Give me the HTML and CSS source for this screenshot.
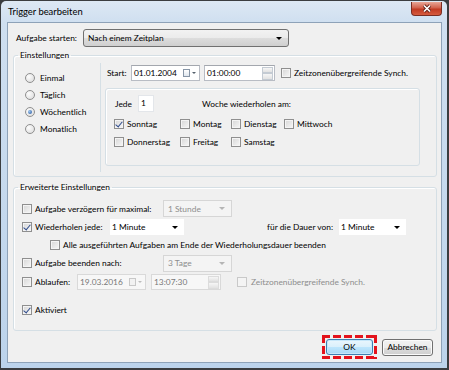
FILE: index.html
```html
<!DOCTYPE html>
<html lang="de">

<head>
    <meta charset="UTF-8">
    <title>Trigger bearbeiten</title>
    <link rel="stylesheet" href="styles.css">
</head>

<body>
    <div class="window">
        <div class="titlebar">
            <span class="title">Trigger bearbeiten</span>
            <span class="close">
                <svg width="10" height="9" viewBox="0 0 10 9">
                    <path d="M2 1.5L8 7.5M8 1.5L2 7.5" stroke="#5a1c14" stroke-width="3.2" fill="none" />
                    <path d="M2 1.5L8 7.5M8 1.5L2 7.5" stroke="#fff" stroke-width="1.7" fill="none" />
                </svg>
            </span>
        </div>

        <div class="client">
            <div class="start-row">
                <span class="start-label">Aufgabe starten:</span>
                <div class="combo combo-main">Nach einem Zeitplan<span class="arrow"></span></div>
            </div>

            <fieldset class="group settings">
                <legend>Einstellungen</legend>
                <div class="settings-body">
                    <div class="radios">
                        <div class="radio-row"><span class="rb"></span>Einmal</div>
                        <div class="radio-row"><span class="rb"></span>Täglich</div>
                        <div class="radio-row"><span class="rb on"></span>Wöchentlich</div>
                        <div class="radio-row"><span class="rb"></span>Monatlich</div>
                    </div>
                    <div class="schedule">
                        <div class="start-line">
                            <span class="lbl-start">Start:</span>
                            <div class="picker date">01.01.2004<span class="cal"></span></div>
                            <div class="picker time">01:00:00<span class="spin"><span></span><span></span></span></div>
                            <span class="cb sync-cb"></span><span>Zeitzonenübergreifende Synch.</span>
                        </div>
                        <div class="panel">
                            <div class="jede-row">
                                <span class="lbl-jede">Jede</span>
                                <span class="num">1</span>
                                <span class="woche">Woche wiederholen am:</span>
                            </div>
                            <div class="days">
                                <div class="day"><span class="cb on"></span>Sonntag</div>
                                <div class="day"><span class="cb"></span>Montag</div>
                                <div class="day"><span class="cb"></span>Dienstag</div>
                                <div class="day"><span class="cb"></span>Mittwoch</div>
                                <div class="day"><span class="cb"></span>Donnerstag</div>
                                <div class="day"><span class="cb"></span>Freitag</div>
                                <div class="day"><span class="cb"></span>Samstag</div>
                            </div>
                        </div>
                    </div>
                </div>
            </fieldset>

            <fieldset class="group advanced">
                <legend>Erweiterte Einstellungen</legend>
                <div class="adv-body">
                    <div class="adv-row r1">
                        <span class="cb"></span>
                        <span class="lbl-long">Aufgabe verzögern für maximal:</span>
                        <div class="combo combo-off">1 Stunde<span class="arrow"></span></div>
                    </div>
                    <div class="adv-row">
                        <span class="cb on"></span>
                        <span class="lbl-rep">Wiederholen jede:</span>
                        <div class="combo combo-edit w74">1 Minute<span class="arrow"></span></div>
                        <span class="lbl-dauer">für die Dauer von:</span>
                        <div class="combo combo-edit w67">1 Minute<span class="arrow"></span></div>
                    </div>
                    <div class="adv-row indent">
                        <span class="cb"></span>
                        <span>Alle ausgeführten Aufgaben am Ende der Wiederholungsdauer beenden</span>
                    </div>
                    <div class="adv-row">
                        <span class="cb"></span>
                        <span class="lbl-long">Aufgabe beenden nach:</span>
                        <div class="combo combo-off">3 Tage<span class="arrow"></span></div>
                    </div>
                    <div class="adv-row r5">
                        <span class="cb"></span>
                        <span class="lbl-ablauf">Ablaufen:</span>
                        <div class="picker date off">19.03.2016<span class="cal"></span></div>
                        <div class="picker time off t70">13:07:30<span class="spin"><span></span><span></span></span></div>
                        <span class="cb off sync-off"></span><span class="grey">Zeitzonenübergreifende Synch.</span>
                    </div>
                    <div class="adv-row r6">
                        <span class="cb on"></span>
                        <span>Aktiviert</span>
                    </div>
                </div>
            </fieldset>

            <div class="buttons">
                <span class="focus"><button class="btn btn-default">OK</button></span>
                <button class="btn">Abbrechen</button>
            </div>
        </div>
    </div>
</body>

</html>
```

FILE: styles.css
```css
* {
    box-sizing: border-box;
    margin: 0;
    padding: 0;
}

body {
    width: 449px;
    height: 370px;
    overflow: hidden;
    background: #3b3d40;
    font-family: Lato, "Segoe UI", sans-serif;
    font-size: 8.4px;
    color: #000;
    white-space: nowrap;
}

.window {
    margin: 1px 0 0 1px;
    width: 446px;
    height: 367px;
    padding: 0 5px 5px 6px;
    display: flex;
    flex-direction: column;
    background: linear-gradient(#dde8f4, #cfdff0 22px, #bcd3eb);
    border-radius: 5px 5px 0 0;
}

.titlebar {
    height: 21px;
    display: flex;
    justify-content: space-between;
}

.title {
    padding-left: 1px;
    font-size: 9.4px;
    line-height: 21px;
}

.close {
    margin-top: 1px;
    width: 31px;
    height: 14px;
    display: flex;
    align-items: center;
    justify-content: center;
    border: 1px solid #7a2d22;
    border-top: none;
    border-radius: 0 0 4px 4px;
    background: linear-gradient(#e8a696, #d2614c 45%, #c13a22 55%, #d55b3e);
}

.client {
    flex: 1;
    border: 1px solid #8ea2b8;
    background: #f0f0f0;
}

/* top row */
.start-row {
    padding: 6px 0 0 8px;
    display: flex;
    align-items: center;
}

.start-label {
    width: 67px;
}

.combo {
    display: flex;
    align-items: center;
    padding-left: 4px;
    height: 17px;
}

.combo .arrow {
    margin-left: auto;
    margin-right: 6px;
    width: 0;
    height: 0;
    border-left: 3px solid transparent;
    border-right: 3px solid transparent;
    border-top: 3px solid #000;
}

.combo-main {
    width: 206px;
    height: 18px;
    border: 1px solid #707070;
    border-radius: 3px;
    background: linear-gradient(#f2f2f2, #ebebeb 50%, #dddddd 50%, #cfcfcf);
}

.combo-off {
    width: 69px;
    border: 1px solid #d6d6d6;
    background: #f4f4f4;
    color: #8d8d8d;
}

.combo-off .arrow {
    border-top-color: #b5b5b5;
}

.combo-edit {
    height: 16px;
    background: #fff;
    padding-left: 2px;
}

.w74 {
    width: 74px;
}

.w67 {
    width: 67px;
}

/* group boxes */
.group {
    margin: 1px 0 0 5px;
    width: 424px;
    border: 1px solid #d5dfe5;
    border-radius: 3px;
    box-shadow: inset 1px 1px 0 #fff;
    min-inline-size: 0;
}

.group legend {
    margin-left: 4px;
    padding: 0 2px;
    line-height: 15px;
}

.settings {
    height: 129px;
}

.settings-body {
    display: flex;
    height: 113px;
}

.radios {
    width: 86px;
    padding: 6px 0 0 11px;
}

.radio-row {
    height: 17px;
    display: flex;
    align-items: center;
    gap: 5px;
}

.rb {
    width: 10px;
    height: 10px;
    border-radius: 50%;
    border: 1px solid #8f8f8f;
    background: radial-gradient(circle at 35% 35%, #fdfdfd, #d8d8d8);
    display: flex;
    align-items: center;
    justify-content: center;
}

.rb.on::after {
    content: "";
    width: 4px;
    height: 4px;
    border-radius: 50%;
    background: radial-gradient(circle at 35% 35%, #9cc6f0, #1f4f97);
}

.schedule {
    flex: 1;
    margin-bottom: 4px;
    border-left: 1px solid #d5dfe5;
    padding-left: 6px;
}

.start-line {
    margin-top: 2px;
    height: 16px;
    display: flex;
    align-items: center;
}

.lbl-start {
    width: 24px;
}

.picker {
    height: 16px;
    display: flex;
    align-items: center;
    padding-left: 2px;
    border: 1px solid #b8bcc4;
    border-top-color: #a3a7ae;
    background: #fff;
}

.picker.date {
    width: 69px;
}

.picker.time {
    margin-left: 4px;
    width: 71px;
}

.picker.t70 {
    margin-left: 5px;
    width: 70px;
}

.cal {
    margin-left: auto;
    margin-right: 9px;
    width: 7px;
    height: 8px;
    border: 1px solid #8795a6;
    background: linear-gradient(#fff, #dfe6ee);
    position: relative;
}

.cal::after {
    content: "";
    position: absolute;
    left: 8px;
    top: 2px;
    border-left: 2px solid transparent;
    border-right: 2px solid transparent;
    border-top: 2px solid #55606c;
}

.spin {
    margin-left: auto;
    margin-right: 1px;
    width: 11px;
    height: 13px;
    display: flex;
    flex-direction: column;
}

.spin span {
    flex: 1;
    border: 1px solid #c4cbd3;
    background: linear-gradient(#f6f6f6, #e2e2e2);
}

.picker.off {
    background: #f7f7f7;
    border-color: #d9d9d9;
    color: #777;
}

.picker.off .cal {
    border-color: #c8c8c8;
    background: #f2f2f2;
}

.picker.off .cal::after {
    border-top-color: #bdbdbd;
}

.picker.off .spin span {
    border-color: #dcdcdc;
}

.cb {
    flex: none;
    width: 10px;
    height: 10px;
    border: 1px solid #8f8f8f;
    background: linear-gradient(135deg, #d6d6d6, #f7f7f7);
    box-shadow: inset 0 0 0 1px #f4f4f4;
    display: flex;
    align-items: center;
    justify-content: center;
}

.cb.on::after {
    content: "";
    width: 3px;
    height: 6px;
    margin-top: -2px;
    border-right: 1.5px solid #2f4c8c;
    border-bottom: 1.5px solid #2f4c8c;
    transform: rotate(40deg);
}

.cb.off {
    border-color: #c9c9c9;
    background: #f4f4f4;
}

.sync-cb {
    margin: 0 3px 0 6px;
}

.panel {
    margin: 7px 0 0 -2px;
    width: 315px;
    height: 78px;
    border: 1px solid #d5dfe5;
    border-radius: 3px;
    box-shadow: inset 1px 1px 0 #fff;
    padding: 6px 0 0 8px;
}

.jede-row {
    height: 17px;
    display: flex;
    align-items: center;
}

.lbl-jede {
    width: 24px;
    padding-left: 1px;
}

.num {
    width: 16px;
    height: 17px;
    padding-left: 2px;
    line-height: 15px;
    background: #fff;
    border: 1px solid #e3e6ea;
}

.woche {
    margin-left: 48px;
}

.days {
    margin-top: 3px;
    display: grid;
    grid-template-columns: 66px 51px 53px auto;
    grid-auto-rows: 18px;
}

.day {
    display: flex;
    align-items: center;
    gap: 3px;
}

/* advanced settings */
.advanced {
    margin-top: 3px;
    height: 151px;
}

.adv-body {
    padding: 4px 0 0 8px;
}

.adv-row {
    height: 18px;
    display: flex;
    align-items: center;
}

.adv-row > .cb:first-child {
    margin-right: 3px;
}

.adv-row.r1 {
    height: 19px;
}

.adv-row.r5 {
    margin-top: 1px;
}

.adv-row.r6 {
    margin-top: 10px;
}

.adv-row.indent {
    padding-left: 28px;
}

.lbl-long {
    width: 128px;
}

.lbl-rep {
    width: 75px;
}

.lbl-dauer {
    width: 155px;
    padding-right: 6px;
    text-align: right;
}

.lbl-ablauf {
    width: 42px;
}

.sync-off {
    margin: 0 4px 0 16px;
}

.grey {
    color: #8d8d8d;
}

/* buttons */
.buttons {
    margin-top: 4px;
    padding-right: 8px;
    display: flex;
    justify-content: flex-end;
    align-items: center;
    gap: 5px;
}

.focus {
    display: flex;
    padding: 4px;
    background:
        repeating-linear-gradient(90deg, #e3121b 0 8px, transparent 8px 11px) top left / 100% 3px no-repeat,
        repeating-linear-gradient(90deg, #e3121b 0 8px, transparent 8px 11px) bottom left / 100% 3px no-repeat,
        repeating-linear-gradient(180deg, #e3121b 0 8px, transparent 8px 11px) top left / 3px 100% no-repeat,
        repeating-linear-gradient(180deg, #e3121b 0 8px, transparent 8px 11px) top right / 3px 100% no-repeat;
}

.btn {
    width: 51px;
    height: 17px;
    font: inherit;
    color: #000;
    border: 1px solid #707070;
    border-radius: 3px;
    background: linear-gradient(#f2f2f2, #ebebeb 50%, #dddddd 50%, #cfcfcf);
    box-shadow: inset 0 0 0 1px #fbfbfb;
}

.btn-default {
    width: 47px;
    height: 16px;
    border-color: #3c7fb1;
    background: linear-gradient(#eaf6fd, #d9f0fc 50%, #bee6fd 50%, #a7d9f5);
    box-shadow: inset 0 0 0 1px #c6e7fa;
}
```
